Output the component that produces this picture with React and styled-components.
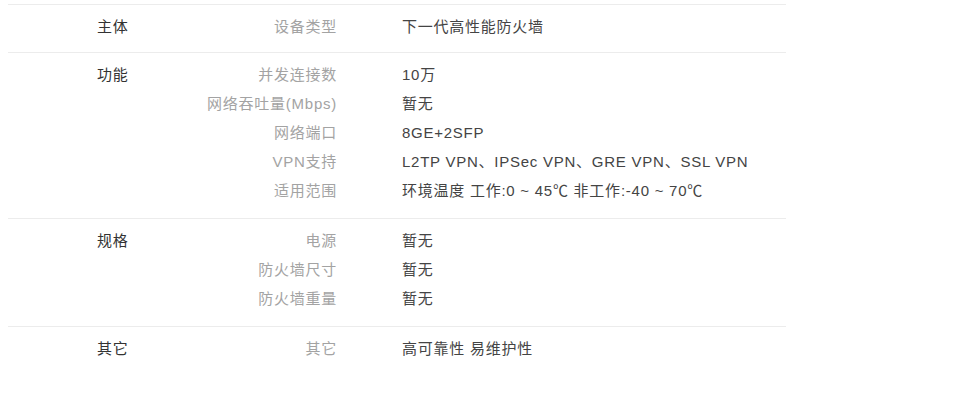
import styled, { createGlobalStyle } from "styled-components";

const GlobalStyle = createGlobalStyle`
  html, body {
    margin: 0;
    padding: 0;
    background: #fff;
  }
  body {
    font-family: "Liberation Sans", "Noto Sans CJK SC", sans-serif;
  }
`;

const specs = [
  {
    title: "主体",
    items: [["设备类型", "下一代高性能防火墙"]],
  },
  {
    title: "功能",
    items: [
      ["并发连接数", "10万"],
      ["网络吞吐量(Mbps)", "暂无"],
      ["网络端口", "8GE+2SFP"],
      ["VPN支持", "L2TP VPN、IPSec VPN、GRE VPN、SSL VPN"],
      ["适用范围", "环境温度 工作:0 ~ 45℃ 非工作:-40 ~ 70℃"],
    ],
  },
  {
    title: "规格",
    items: [
      ["电源", "暂无"],
      ["防火墙尺寸", "暂无"],
      ["防火墙重量", "暂无"],
    ],
  },
  {
    title: "其它",
    items: [["其它", "高可靠性 易维护性"]],
  },
];

export default function App() {
  return (
    <>
      <GlobalStyle />
      <Table>
        {specs.map((group, i) => (
          <Group key={group.title} $first={i === 0}>
            <GroupTitle>{group.title}</GroupTitle>
            <Rows>
              {group.items.map(([k, v]) => (
                <Row key={k}>
                  <Key>{k}</Key>
                  <Value>{v}</Value>
                </Row>
              ))}
            </Rows>
          </Group>
        ))}
      </Table>
    </>
  );
}

const Table = styled.div`
  width: 778px;
  margin: 4px 0 0 8px;
  font-size: 15px;
  letter-spacing: 0.75px;
`;

const Group = styled.div`
  display: flex;
  align-items: flex-start;
  border-top: 1px solid #ececec;
  padding: 7px 0 ${(p) => (p.$first ? "11px" : "13px")};
`;

const GroupTitle = styled.div`
  width: 180px;
  flex: none;
  box-sizing: border-box;
  padding-left: 89px;
  line-height: 29px;
  color: #333;
`;

const Rows = styled.div`
  flex: 1;
  display: flex;
  flex-direction: column;
`;

const Row = styled.div`
  display: grid;
  grid-template-columns: 149px 1fr;
  column-gap: 65px;
  line-height: 29px;
`;

const Key = styled.div`
  text-align: right;
  color: #a3a3a3;
  white-space: nowrap;
`;

const Value = styled.div`
  color: #444;
  white-space: nowrap;
`;
